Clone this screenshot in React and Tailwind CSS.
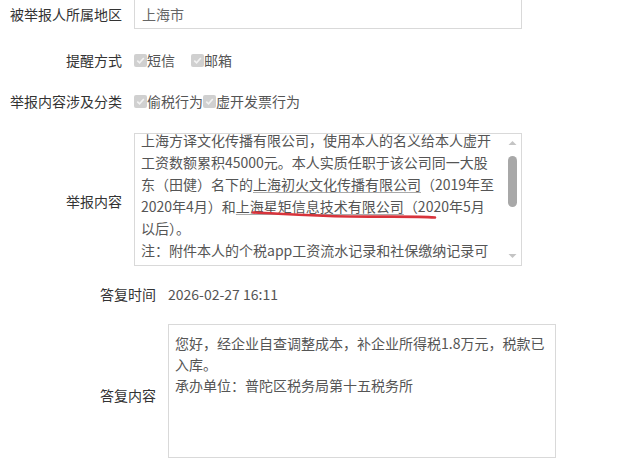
const FONT = { fontFamily: '"Noto Sans CJK SC", "Noto Sans", sans-serif' }

const Check = ({ label }) => (
  <span className="flex items-center">
    <span className="w-[13px] h-[13px] bg-[#d0d0d0] rounded-[2px] flex items-center justify-center">
      <svg width="11" height="11" viewBox="0 0 12 12">
        <path d="M2.5 6.2 L5 8.6 L9.6 3.2" fill="none" stroke="#f2f2f2" strokeWidth="1.8" />
      </svg>
    </span>
    <span>{label}</span>
  </span>
)

const reportLines = [
  '上海方译文化传播有限公司，使用本人的名义给本人虚开',
  '工资数额累积45000元。本人实质任职于该公司同一大股',
  <>东（田健）名下的<span className="underline decoration-[#aaa] underline-offset-2">上海初火文化传播有限公司</span>（2019年至</>,
  <>2020年4月）和<span className="underline decoration-[#aaa] underline-offset-2">上海星矩信息技术有限公司</span>（2020年5月</>,
  '以后）。',
  '注：附件本人的个税app工资流水记录和社保缴纳记录可',
  '以证明以上。',
]

export default function App() {
  return (
    <div className="w-[640px] h-[476px] bg-white overflow-hidden text-[14px] text-[#333]" style={FONT}>
      {/* upper block */}
      <div className="flex items-center h-[29px]">
        <div className="w-[122px] text-right">被举报人所属地区</div>
        <div className="ml-[12px] w-[388px] h-[29px] border-x border-b border-[#d9d9d9] flex items-center pl-[7px] text-[#666]">
          上海市
        </div>
      </div>

      <div className="flex items-center h-[22px] mt-[20px]">
        <div className="w-[122px] text-right">提醒方式</div>
        <div className="ml-[12px] flex items-center gap-[16px] text-[#555]">
          <Check label="短信" />
          <Check label="邮箱" />
        </div>
      </div>

      <div className="flex items-center h-[22px] mt-[19px]">
        <div className="w-[122px] text-right">举报内容涉及分类</div>
        <div className="ml-[12px] flex items-center text-[#555]">
          <Check label="偷税行为" />
          <Check label="虚开发票行为" />
        </div>
      </div>

      <div className="flex items-center mt-[21px]">
        <div className="w-[122px] text-right mt-[4px]">举报内容</div>
        <div className="ml-[12px] relative w-[388px] h-[133px] border border-[#d9d9d9] overflow-hidden">
          <div className="mt-[-5px] pl-[6px] leading-[22px] text-[#555] whitespace-nowrap">
            {reportLines.map((l, i) => (
              <div key={i}>{l}</div>
            ))}
          </div>
          <svg className="absolute left-0 top-0" width="388" height="133">
            <path
              d="M118 78.5 C 150 80, 175 82, 215 82.5 C 250 83, 280 82, 300 83.5"
              fill="none"
              stroke="#d8333b"
              strokeWidth="2.6"
              strokeLinecap="round"
            />
          </svg>
          {/* scrollbar */}
          <div className="absolute right-[2px] top-0 bottom-0 w-[14px] bg-white flex flex-col items-center">
            <svg width="9" height="6" viewBox="0 0 9 6" className="mt-[6px]">
              <path d="M0.5 5 L4.5 1 L8.5 5 Z" fill="#c4c4c4" />
            </svg>
            <div className="mt-[10px] w-[9px] h-[51px] bg-[#a8a8a8] rounded-[5px]" />
            <div className="flex-1" />
            <svg width="9" height="6" viewBox="0 0 9 6" className="mb-[6px]">
              <path d="M0.5 1 L4.5 5 L8.5 1 Z" fill="#c4c4c4" />
            </svg>
          </div>
        </div>
      </div>

      {/* lower block */}
      <div className="flex items-center h-[22px] mt-[17px]">
        <div className="w-[156px] text-right">答复时间</div>
        <div className="ml-[12px] text-[#555]">2026-02-27 16:11</div>
      </div>

      <div className="flex items-center mt-[19px]">
        <div className="w-[156px] text-right mt-[8px]">答复内容</div>
        <div className="ml-[12px] w-[388px] h-[134px] border border-[#d9d9d9] pt-[8px] pl-[6px] leading-[21px] text-[#555] whitespace-nowrap">
          <div>您好，经企业自查调整成本，补企业所得税1.8万元，税款已</div>
          <div>入库。</div>
          <div>承办单位：普陀区税务局第十五税务所</div>
        </div>
      </div>
    </div>
  )
}
